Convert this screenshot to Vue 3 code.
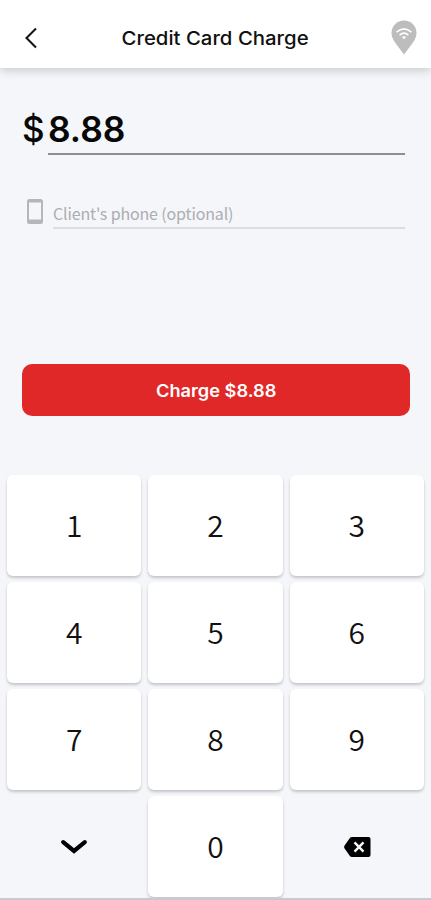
<template>
  <div class="screen">
    <header class="top-bar">
      <button class="icon-button back" aria-label="Back">
        <svg width="14" height="22" viewBox="0 0 14 22">
          <path d="M12 1.5 L2.5 11 L12 20.5" fill="none" stroke="#151515" stroke-width="2.1" />
        </svg>
      </button>
      <h1 class="title"><span class="wide">Credit Card Charge</span></h1>
      <button class="icon-button reader" aria-label="Reader">
        <svg width="26" height="35" viewBox="0 0 26 35">
          <path
            d="M13 .5 C6 .5 .5 6 .5 13 C.5 16.5 2 19.5 4 22.5 L13 34.5 L22 22.5 C24 19.5 25.5 16.5 25.5 13 C25.5 6 20 .5 13 .5 Z"
            fill="#bdbdbd"
          />
          <g fill="none" stroke="#fff" stroke-width="1.7">
            <path d="M5.6 12.2 Q13 5.6 20.4 12.2" />
            <path d="M8.6 15.2 Q13 11.2 17.4 15.2" />
          </g>
          <path d="M10.9 17.1 Q13 15.5 15.1 17.1 L13 19.3 Z" fill="#fff" />
        </svg>
      </button>
    </header>

    <main class="form">
      <div class="amount-row">
        <span class="currency">$</span>
        <div class="amount"><span class="wide">{{ amount }}</span></div>
      </div>

      <div class="phone-row">
        <svg class="phone-icon" width="16" height="25" viewBox="0 0 16 25">
          <path
            d="M2.5 0 H13.5 Q16 0 16 2.5 V22.5 Q16 25 13.5 25 H2.5 Q0 25 0 22.5 V2.5 Q0 0 2.5 0 Z M2 3.5 V20.5 H14 V3.5 Z"
            fill="#b5b6ba"
            fill-rule="evenodd"
          />
        </svg>
        <div class="phone-field">Client's phone (optional)</div>
      </div>

      <button class="charge"><span class="wide">Charge ${{ amount }}</span></button>
    </main>

    <section class="keypad">
      <button v-for="n in 9" :key="n" class="key" @click="press(n)">{{ n }}</button>
      <button class="key flat" aria-label="Hide keypad">
        <svg width="28" height="16" viewBox="0 0 28 16">
          <path d="M3.2 3.2 L14 12 L24.8 3.2" fill="none" stroke="#000" stroke-width="4.2" stroke-linecap="round" />
        </svg>
      </button>
      <button class="key" @click="press(0)">0</button>
      <button class="key flat" aria-label="Delete" @click="erase">
        <svg class="erase" width="27" height="20" viewBox="0 0 27 20">
          <path
            d="M8 0 H24.5 Q26.5 0 26.5 2 V18 Q26.5 20 24.5 20 H8 Q6.6 20 5.7 18.8 L.6 11.4 Q-.4 10 .6 8.6 L5.7 1.2 Q6.6 0 8 0 Z"
            fill="#000"
          />
          <path d="M10.5 5.3 L19.5 14.7 M19.5 5.3 L10.5 14.7" stroke="#f5f6fb" stroke-width="2.4" />
        </svg>
      </button>
    </section>
  </div>
</template>

<script setup>
import { computed, ref } from 'vue'

const cents = ref(888)

const amount = computed(() => (cents.value / 100).toFixed(2))

function press(n) {
  cents.value = cents.value * 10 + n
}

function erase() {
  cents.value = Math.floor(cents.value / 10)
}
</script>

<style>
body {
  background: #f5f6fa;
}
</style>

<style scoped>
.screen {
  display: flex;
  flex-direction: column;
  height: 900px;
  box-sizing: border-box;
  overflow: hidden;
  background: #f5f6fa;
  border-bottom: 2px solid #c9cacf;
  font-family: Inter, "Liberation Sans", sans-serif;
  color: #111;
}

button {
  display: flex;
  align-items: center;
  justify-content: center;
  padding: 0;
  border: 0;
  background: none;
  color: inherit;
  font-family: inherit;
}

.wide {
  display: inline-block;
}

.top-bar {
  display: grid;
  grid-template-columns: 60px 1fr 60px;
  flex: none;
  height: 68px;
  padding-top: 7px;
  box-sizing: border-box;
  background: #fff;
  box-shadow: 0 2px 10px rgba(0, 0, 0, 0.2);
}

.back {
  justify-content: flex-start;
  padding-left: 24px;
}

.reader {
  justify-content: flex-end;
  padding: 0 14px 2px 0;
}

.title {
  margin: 0;
  font-size: 18.5px;
  font-weight: 550;
  line-height: 62px;
  text-align: center;
  white-space: nowrap;
}

.title .wide {
  transform: scaleX(1.1);
}

.form {
  flex: none;
  height: 407px;
  padding: 0 22px;
  box-sizing: border-box;
}

.amount-row {
  display: flex;
  height: 87px;
  padding: 35px 4px 0 0;
  box-sizing: border-box;
  font-size: 35px;
  font-weight: 600;
  line-height: 52px;
  color: #080808;
}

.currency {
  width: 26px;
  font-weight: 550;
}

.amount {
  flex: 1;
  height: 50px;
  border-bottom: 2px solid #8e8f94;
}

.amount .wide {
  transform: scaleX(1.01);
  transform-origin: left;
}

.phone-row {
  display: flex;
  height: 74px;
  padding: 44px 4px 0 5px;
  box-sizing: border-box;
}

.phone-icon {
  flex: none;
  margin-right: 10px;
}

.phone-field {
  flex: 1;
  height: 28px;
  border-bottom: 2px solid #dcdde1;
  color: #acadb1;
  font-family: "Noto Sans CJK SC", sans-serif;
  font-size: 16px;
  letter-spacing: -0.15px;
  line-height: 29px;
}

.charge {
  width: 388px;
  height: 52px;
  margin-top: 135px;
  padding-top: 2px;
  border-radius: 10px;
  background: #e12828;
  color: #fff;
  font-size: 17px;
  font-weight: 600;
}

.charge .wide {
  transform: scaleX(1.07);
}

.keypad {
  display: grid;
  grid-template-columns: repeat(3, 1fr);
  grid-auto-rows: 101px;
  gap: 6px 7px;
  padding: 0 7px;
}

.key {
  padding-bottom: 3px;
  border-radius: 6px;
  background: #fff;
  box-shadow: 0 2px 3px rgba(0, 0, 0, 0.2);
  font-family: "Noto Sans CJK SC", sans-serif;
  font-size: 30px;
  font-weight: 350;
}

.key.flat {
  padding-bottom: 0;
  background: none;
  box-shadow: none;
}

.erase {
  margin-left: 1px;
}
</style>
